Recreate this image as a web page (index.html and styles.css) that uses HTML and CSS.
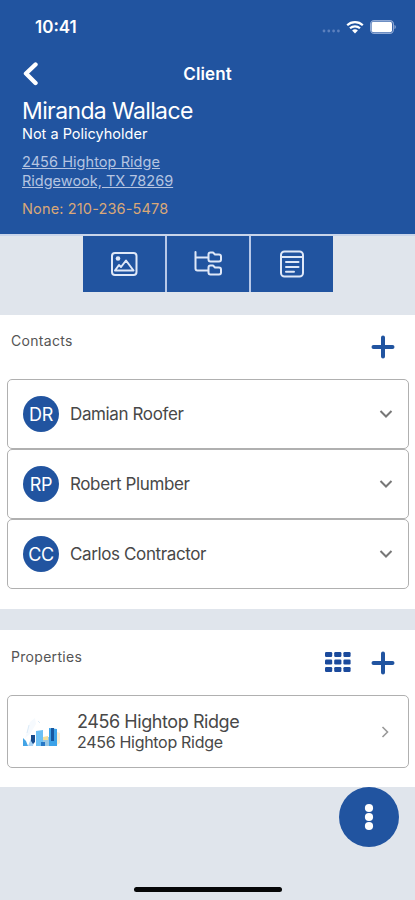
FILE: index.html
```html
<!DOCTYPE html>
<html lang="en">
<head>
<meta charset="utf-8">
<meta name="viewport" content="width=device-width, initial-scale=1">
<title>Client</title>
<link rel="stylesheet" href="styles.css">
</head>
<body>
<main class="screen">
  <header class="header">
    <div class="status">
      <span class="time">10:41</span>
      <div class="indicators">
        <svg class="cell" width="18" height="4" viewBox="0 0 18 4"><circle cx="2" cy="2" r="1.4"/><circle cx="6.8" cy="2" r="1.4"/><circle cx="11.6" cy="2" r="1.4"/><circle cx="16.4" cy="2" r="1.4"/></svg>
        <svg class="wifi" width="18" height="14" viewBox="0 0 18 14"><path d="M1.2 5.2a11.3 11.3 0 0 1 15.6 0M4 8.3a7.2 7.2 0 0 1 10 0" fill="none" stroke="#fff" stroke-width="2.2"/><path d="M9 13.5 6.1 10.6a4.1 4.1 0 0 1 5.8 0Z" fill="#fff"/></svg>
        <svg width="26" height="14" viewBox="0 0 26 14"><rect x=".6" y=".6" width="22.8" height="12.8" rx="3.6" fill="none" stroke="#8fa9d5" stroke-width="1.2"/><rect x="1.6" y="1.8" width="20.4" height="10.4" rx="2" fill="#fff"/><path d="M24.5 5v4c1-.4 1.3-1.2 1.3-2s-.3-1.6-1.3-2Z" fill="#8fa9d5"/></svg>
      </div>
    </div>
    <nav class="nav">
      <svg class="back" width="16" height="24" viewBox="0 0 16 24"><path d="M13.5 2.500 4 11.500l9.500 9.500" fill="none" stroke="#fff" stroke-width="4.400" stroke-linecap="round" stroke-linejoin="round"/></svg>
      <h1 class="title">Client</h1>
    </nav>
    <section class="client">
      <h2 class="name">Miranda Wallace</h2>
      <p class="policy">Not a Policyholder</p>
      <address class="address"><span class="street">2456 Hightop Ridge</span><br><span class="city">Ridgewook, TX 78269</span></address>
      <p class="phone">None: 210-236-5478</p>
    </section>
  </header>
  <div class="tabs">
    <div class="tab"><svg width="28" height="28" viewBox="0 0 28 28"><rect x="2" y="3" width="24.500" height="22" rx="3"/><circle cx="8" cy="8.500" r="2.300" class="solid"/><path d="M5 20.500 9 15l2 2 5-6.500 7.500 10H5Z"/></svg></div>
    <div class="tab"><svg width="28" height="28" viewBox="0 0 28 28"><path d="M1.500 2v16.500q0 2 2 2H14M1.500 7.500H14M14.500 4.500q0-2 2-2h2.500l2 2h4q2 0 2 2v3q0 2-2 2h-8.500q-2 0-2-2ZM14.500 17.500q0-2 2-2h2.500l2 2h4q2 0 2 2v3q0 2-2 2h-8.500q-2 0-2-2Z"/></svg></div>
    <div class="tab"><svg width="28" height="28" viewBox="0 0 28 28"><rect x="3" y="1.500" width="22" height="25" rx="3.500"/><path d="M3 7h22M8 12h12.500M8 17h12.500M8 21.800h8"/></svg></div>
  </div>

  <section class="panel contacts">
    <div class="panel-head">
      <h3 class="label">Contacts</h3>
      <svg class="plus" width="24" height="24" viewBox="0 0 24 24"><path d="M12 2.500v19M2.500 12h19"/></svg>
    </div>
    <ul class="list">
      <li class="card"><span class="avatar">DR</span><span class="person">Damian Roofer</span><svg class="chev" width="14" height="10" viewBox="0 0 14 10"><path d="m1.500 2 5.500 5.500L12.500 2"/></svg></li>
      <li class="card"><span class="avatar">RP</span><span class="person">Robert Plumber</span><svg class="chev" width="14" height="10" viewBox="0 0 14 10"><path d="m1.500 2 5.500 5.500L12.500 2"/></svg></li>
      <li class="card"><span class="avatar">CC</span><span class="person">Carlos Contractor</span><svg class="chev" width="14" height="10" viewBox="0 0 14 10"><path d="m1.500 2 5.500 5.500L12.500 2"/></svg></li>
    </ul>
  </section>

  <section class="panel properties">
    <div class="panel-head">
      <h3 class="label">Properties</h3>
      <svg class="grid" width="26" height="21" viewBox="0 0 26 21"><g fill="#1b4a9c"><rect y="0" width="7.200" height="5" rx="1.200"/><rect x="9.200" y="0" width="7.200" height="5" rx="1.200"/><rect x="18.400" y="0" width="7.200" height="5" rx="1.200"/><rect y="7.500" width="7.200" height="5" rx="1.200"/><rect x="9.200" y="7.500" width="7.200" height="5" rx="1.200"/><rect x="18.400" y="7.500" width="7.200" height="5" rx="1.200"/><rect y="15" width="7.200" height="5" rx="1.200"/><rect x="9.200" y="15" width="7.200" height="5" rx="1.200"/><rect x="18.400" y="15" width="7.200" height="5" rx="1.200"/></g></svg>
      <svg class="plus" width="24" height="24" viewBox="0 0 24 24"><path d="M12 2.500v19M2.500 12h19"/></svg>
    </div>
    <div class="card property">
      <svg class="thumb" width="38" height="36" viewBox="0 0 38 36">
        <path d="M2 24 7 8l5-4 1 6-6 10Z" fill="#f6fafe"/><path d="m4 19 2-8M15 7l2 2" stroke="#dcebf8"/>
        <path d="M0 24l3 3 2 5H0Z" fill="#43a4e6"/><path d="M5 32h5l2-8-3-2Z" fill="#a9d2f3"/><path d="M8 21h4v7l-2 2-2-3Z" fill="#174a8c"/>
        <path d="M13 17l7-1v16h-7Z" fill="#6cc0f5"/><path d="M20 23h6v9h-6Z" fill="#9bc8e4"/><path d="M20 23l5-1v4h-5Z" fill="#f2df9b"/><path d="M18 28h4v4h-4Z" fill="#2878c6"/>
        <path d="M26 14l8 1v17h-8Z" fill="#3ca2e8"/><path d="M28 14h3v13h-3Z" fill="#17579f"/><path d="M34 18l3 1v10l-3 2Z" fill="#fbefd5"/>
      </svg>
      <div class="property-text"><div class="property-name">2456 Hightop Ridge</div><div class="property-address">2456 Hightop Ridge</div></div>
      <svg class="next" width="10" height="14" viewBox="0 0 10 14"><path d="m2.500 2 5 5-5 5"/></svg>
    </div>
  </section>
  <div class="fab"><svg width="12" height="28" viewBox="0 0 12 28"><g fill="#fff"><circle cx="6" cy="5" r="4.100"/><circle cx="6" cy="14" r="4.100"/><circle cx="6" cy="23" r="4.100"/></g></svg></div>
  <div class="home"></div>
</main>
</body>
</html>
```
FILE: styles.css
```css
* { box-sizing: border-box; }
body, h1, h2, h3, p, ul { margin: 0; padding: 0; }
body { font-family: Inter, "Liberation Sans", sans-serif; background: #e0e5ec; }
svg { display: block; flex: none; }
.screen { position: relative; width: 415px; height: 900px; overflow: hidden; background: #e0e5ec; }
.header { height: 234px; background: #2154a0; color: #fff; }
.status { display: flex; justify-content: space-between; height: 54px; padding: 17px 19px 0 35px; }
.time { font-size: 17px; line-height: 20px; font-weight: 600; }
.indicators { display: flex; padding-top: 3px; }
.cell { margin: 9px 6px 0 0; fill: #5c80bd; }
.wifi { margin-right: 6px; }
.nav { display: grid; grid-template-columns: 1fr auto 1fr; align-items: center; height: 40px; padding: 0 22px; }
.title { grid-column: 2; font-size: 17px; line-height: 20px; font-weight: 600; letter-spacing: .1px; }
.client { padding: 3px 22px 0; }
.name { font-size: 23px; line-height: 28px; font-weight: 400; letter-spacing: -.62px; white-space: nowrap; }
.policy { font-size: 14.500px; line-height: 18px; }
.address { margin-top: 10px; font-size: 14.500px; line-height: 18.500px; font-style: normal; text-decoration: underline; color: #b5c4e1; }
.street { letter-spacing: .06px; }
.phone { margin-top: 10px; font-size: 14.500px; line-height: 18px; letter-spacing: .15px; color: #d9a878; }
.tabs { display: flex; gap: 2px; height: 58px; padding: 2px 82px 0 83px; background: linear-gradient(#c9d5ea 2px, transparent 2px); }
.tab { display: flex; flex: 1; align-items: center; justify-content: center; background: #2154a0; }
.tab + .tab { box-shadow: -2px 0 #b7c8e8; }
.tab svg { fill: none; stroke: #dfe8f8; stroke-width: 2; stroke-linejoin: round; stroke-linecap: round; }
.tab .solid { fill: #dfe8f8; stroke: none; }
.panel { background: #fff; padding: 0 6px 0 7px; }
.contacts { height: 294px; margin-top: 23px; }
.properties { height: 157px; margin-top: 21px; }
.panel-head { display: flex; padding: 0 14px 0 4px; }
.contacts .panel-head { height: 64px; padding-top: 17px; }
.properties .panel-head { height: 65px; padding-top: 18px; }
.label { margin-right: auto; font-size: 14px; line-height: 18px; font-weight: 400; letter-spacing: .3px; color: #555; }
.plus { margin-top: 3px; fill: none; stroke: #2154a0; stroke-width: 4; stroke-linecap: round; }
.grid { margin: 4px 20px 0 0; }
.list { list-style: none; }
.card { display: flex; align-items: center; height: 70px; padding: 0 15px; border: 1px solid #b0b0b0; border-radius: 5px; background: #fff; }
.avatar { display: flex; align-items: center; justify-content: center; width: 36px; height: 36px; margin-right: 11px; border-radius: 50%; background: #2154a0; color: #fff; font-size: 18px; letter-spacing: -.3px; }
.person { margin-right: auto; font-size: 17px; line-height: 22px; letter-spacing: -.38px; color: #484848; }
.chev { fill: none; stroke: #777; stroke-width: 2; }
.property { height: 73px; }
.thumb { margin-right: 16px; }
.property-text { margin-right: auto; color: #484848; }
.property-name { font-size: 18px; line-height: 21px; letter-spacing: -.43px; }
.property-address { font-size: 16px; line-height: 20px; letter-spacing: -.3px; }
.next { margin-right: 3px; fill: none; stroke: #999; stroke-width: 1.600; }
.fab { position: absolute; left: 338.500px; top: 787px; display: flex; align-items: center; justify-content: center; width: 60px; height: 60px; border-radius: 50%; background: #2154a0; }
.home { position: absolute; left: 134px; top: 886.500px; width: 148px; height: 5px; border-radius: 3px; background: #060708; }
```
